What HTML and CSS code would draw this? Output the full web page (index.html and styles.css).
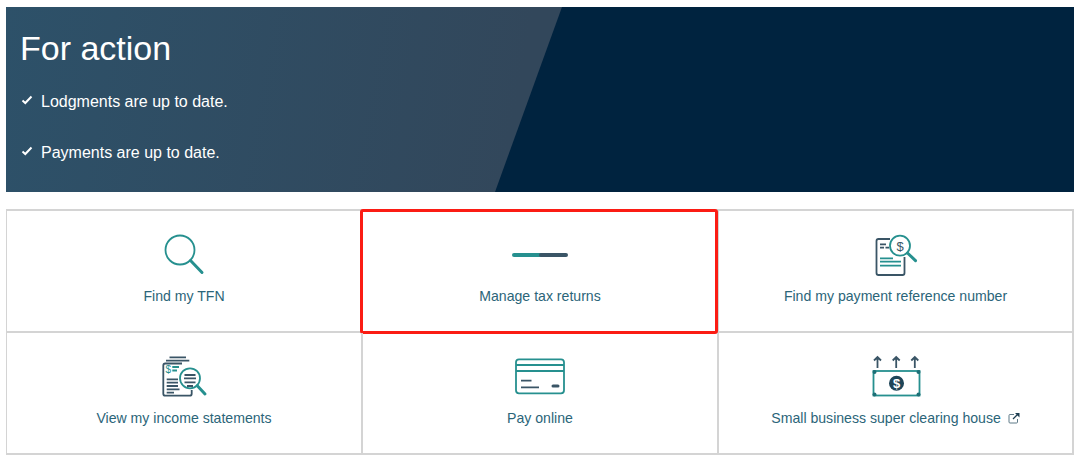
FILE: index.html
```html
<!DOCTYPE html>
<html lang="en">
<head>
  <meta charset="UTF-8" />
  <title>For action</title>
  <link rel="stylesheet" href="styles.css">
</head>
<body>
  <!-- Status banner -->
  <section class="banner">
    <h1>For action</h1>
    <ul class="status-list">
      <li>
        <svg class="tick" viewBox="0 0 12 10"><path d="M1.5 5.5 L4.3 8 L10.5 1.5" /></svg>
        Lodgments are up to date.
      </li>
      <li>
        <svg class="tick" viewBox="0 0 12 10"><path d="M1.5 5.5 L4.3 8 L10.5 1.5" /></svg>
        Payments are up to date.
      </li>
    </ul>
  </section>

  <!-- Quick links -->
  <div class="tiles">
    <a class="tile" href="#">
      <svg class="icon" viewBox="0 0 60 50">
        <circle class="teal" cx="26" cy="19" r="14.500" />
        <path class="teal thick" d="M36.500 29.500 L48 41.500" />
      </svg>
      <span>Find my TFN</span>
    </a>

    <a class="tile tile-flagged" href="#">
      <svg class="icon" viewBox="0 0 60 50">
        <path class="teal bar" d="M4 24 H31" />
        <path class="slate bar" d="M31 24 H56" />
      </svg>
      <span>Manage tax returns</span>
    </a>

    <a class="tile" href="#">
      <svg class="icon" viewBox="0 0 60 50">
        <path class="slate" d="M24 8 H12.500 a2 2 0 0 0 -2 2 V42 a2 2 0 0 0 2 2 H36.500 a2 2 0 0 0 2 -2 V26" />
        <path class="slate" d="M14 13.300 H20 M14 16.700 H18 M19.500 16.700 H23" />
        <path class="teal" d="M14 27.300 H27 M14 30.700 H35 M14 34.700 H35" />
        <circle class="teal" cx="34" cy="14.700" r="10" />
        <path class="teal thick" d="M41.500 22 L49.500 29.700" />
        <text class="dollar" x="34" y="19.500">$</text>
      </svg>
      <span>Find my payment reference number</span>
    </a>

    <a class="tile" href="#">
      <svg class="icon" viewBox="0 0 60 50">
        <path class="slate" d="M15.500 4.300 H32 M12 7.700 H35.300" />
        <path class="slate" d="M28 10.500 H11.300 a2 2 0 0 0 -2 2 V40.700 a2 2 0 0 0 2 2 H35.700 a2 2 0 0 0 2 -2 V37" />
        <text class="dollar small" x="14.300" y="19.500">$</text>
        <path class="teal" d="M18.300 14 H25 M18.300 17.500 H23" />
        <path class="slate" d="M12.700 26.300 H24 M12.700 29.700 H24 M12.700 33 H24 M12.700 36.300 H25.500 M12.700 39.700 H20" />
        <circle class="teal" cx="36" cy="25.300" r="10" />
        <path class="slate" d="M30.500 22 H41.500 M30 25.300 H42 M30.500 29.300 H41.500 M33 33 H39" />
        <path class="teal thick" d="M43.300 32.700 L51 41" />
      </svg>
      <span>View my income statements</span>
    </a>

    <a class="tile" href="#">
      <svg class="icon" viewBox="0 0 60 50">
        <rect class="teal" x="6" y="6.300" width="48" height="34" rx="3" />
        <path class="teal" d="M6 12 H54 M6 18 H54" />
        <path class="slate" d="M11 27.700 H21.500 M11 34.300 H29" />
        <path class="slate thick" d="M43 33 H48" />
      </svg>
      <span>Pay online</span>
    </a>

    <a class="tile" href="#">
      <svg class="icon" viewBox="0 0 60 50">
        <path class="slate" d="M11.500 15 V4 M8 7.500 L11.500 4 L15 7.500 M30.200 15 V4 M26.700 7.500 L30.200 4 L33.700 7.500 M48.800 15 V4 M45.300 7.500 L48.800 4 L52.300 7.500" />
        <rect class="teal" x="7.500" y="18" width="46" height="24.500" />
        <circle class="dark-fill" cx="30.500" cy="30.300" r="7.500" />
        <text class="dollar light" x="30.500" y="34.800">$</text>
        <circle class="corner" cx="8.500" cy="19" r="2" />
        <circle class="corner" cx="52.500" cy="19" r="2" />
        <circle class="corner" cx="8.500" cy="41.500" r="2" />
        <circle class="corner" cx="52.500" cy="41.500" r="2" />
      </svg>
      <span>Small business super clearing house
        <svg class="external" viewBox="0 0 12 12">
          <path class="slate-thin" d="M6 2.500 H2 a1 1 0 0 0 -1 1 V10 a1 1 0 0 0 1 1 H8.500 a1 1 0 0 0 1 -1 V7" />
          <path class="arrow-line" d="M5 7 L9.500 2.500" />
          <path class="arrow-head" d="M7 1 H11.500 V5.500 Z" />
        </svg>
      </span>
    </a>
  </div>
</body>
</html>
```

FILE: styles.css
```css
body {
  margin: 0;
  padding: 7px 6px 0;
  background: #ffffff;
  font-family: "Liberation Sans", Arial, sans-serif;
}

.banner {
  position: relative;
  height: 185px;
  box-sizing: border-box;
  padding: 22px 14px 0;
  background: linear-gradient(100deg, #2d5169 0%, #32475b 48%);
  color: #ffffff;
  overflow: hidden;
}

/* dark slanted panel on the right */
.banner::after {
  content: "";
  position: absolute;
  inset: 0;
  background: #00233f;
  clip-path: polygon(556px 0, 100% 0, 100% 100%, 489px 100%);
}

.banner h1 {
  margin: 0;
  font-size: 34px;
  line-height: 38px;
  font-weight: 400;
}

.status-list {
  list-style: none;
  margin: 26px 0 0;
  padding: 0 0 0 1px;
  font-size: 16px;
  line-height: 18px;
}

.status-list li {
  display: flex;
  align-items: center;
  gap: 8px;
  margin-bottom: 33px;
}

.tick {
  width: 12px;
  height: 10px;
  margin-top: -4px;
}

.tick path {
  fill: none;
  stroke: #ffffff;
  stroke-width: 2;
}

.tiles {
  display: grid;
  grid-template-columns: 356px 356px 355px;
  grid-template-rows: 122px 122px;
  margin-top: 17px;
  width: 1068px;
  height: 246px;
  box-sizing: border-box;
  border-top: 2px solid #d4d4d4;
  border-left: 1px solid #d4d4d4;
}

.tile {
  position: relative;
  display: flex;
  flex-direction: column;
  align-items: center;
  box-sizing: border-box;
  padding-top: 20px;
  border-right: 2px solid #d4d4d4;
  border-bottom: 2px solid #d4d4d4;
  color: #2b6579;
  font-size: 14.100px;
  line-height: 18px;
  text-decoration: none;
}

.tile span {
  margin-top: 6px;
}

/* red annotation around the tile */
.tile-flagged::after {
  content: "";
  position: absolute;
  top: -2px;
  left: -3px;
  right: -1px;
  bottom: -3px;
  border: 3px solid #fb1c14;
  border-radius: 3px;
}

.icon {
  width: 60px;
  height: 50px;
}

.icon path,
.icon circle,
.icon rect {
  fill: none;
  stroke-width: 1.800;
}

.icon .thick {
  stroke-width: 3;
  stroke-linecap: round;
}

.icon .bar {
  stroke-width: 4;
  stroke-linecap: round;
}

.icon .teal {
  stroke: #26908f;
}

.icon .slate {
  stroke: #3a5566;
}

.icon .dark-fill {
  fill: #1f4558;
  stroke: none;
}

.icon .corner {
  fill: #1d6f76;
  stroke: none;
}

.dollar {
  font-size: 13px;
  text-anchor: middle;
  fill: #3a5566;
}

.dollar.small {
  font-size: 10px;
  fill: #26908f;
}

.dollar.light {
  font-size: 13px;
  font-weight: 700;
  fill: #ffffff;
}

.external {
  width: 12px;
  height: 12px;
  margin-left: 3px;
  vertical-align: -1px;
}

.slate-thin {
  fill: none;
  stroke: #5f7a88;
  stroke-width: 1;
}

.arrow-line {
  fill: none;
  stroke: #1f3f52;
  stroke-width: 1.300;
}

.arrow-head {
  fill: #1f3f52;
}
```
